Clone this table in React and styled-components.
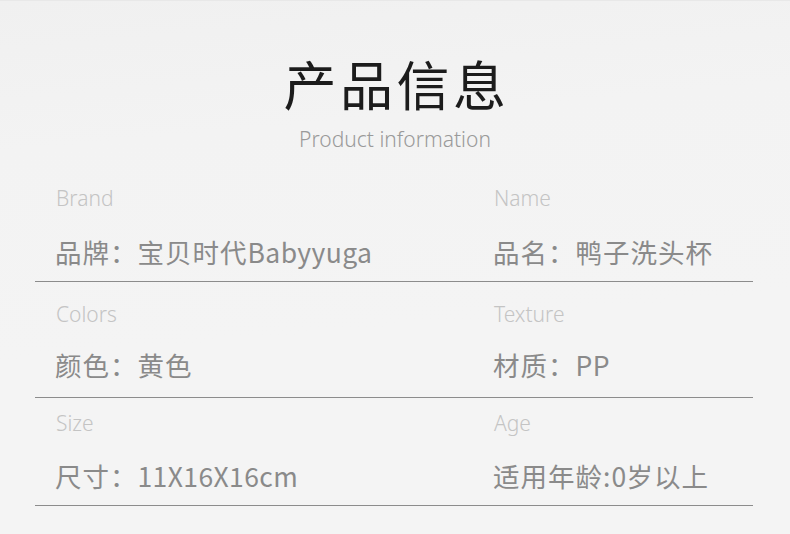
import React from 'react'
import styled, { createGlobalStyle } from 'styled-components'

const Global = createGlobalStyle`
  html, body { margin: 0; padding: 0; background: #f4f4f4; }
  body { font-family: "Noto Sans CJK SC", "Noto Sans", sans-serif; }
`

const Page = styled.div`
  width: 790px;
  height: 534px;
  overflow: hidden;
  background: linear-gradient(175deg, #f0f0f0 0%, #f3f3f3 25%, #f4f4f4 60%);
  border-top: 1px solid #e8e8e8;
  box-sizing: border-box;
  padding-top: 50px;
`

const Header = styled.div`
  display: flex;
  flex-direction: column;
  align-items: center;
`

const Title = styled.h1`
  margin: 0;
  font-size: 53px;
  line-height: 64px;
  font-weight: 400;
  letter-spacing: 3.5px;
  padding-left: 3px;
  color: #1c1c1c;
`

const Subtitle = styled.div`
  margin-top: 12px;
  font-family: "Noto Sans", sans-serif;
  font-size: 21px;
  line-height: 24px;
  font-weight: 300;
  color: #9a9a9a;
`

const Table = styled.div`
  margin: 24px 37px 0 35px;
`

const Row = styled.div`
  display: grid;
  grid-template-columns: 438px 1fr;
  padding: ${({ $top }) => $top}px 0 0 20px;
  height: ${({ $h }) => $h}px;
  box-sizing: border-box;
  border-bottom: 1px solid #8c8c8c;
`

const Cell = styled.div`
  display: flex;
  flex-direction: column;
`

const Label = styled.div`
  font-family: "Noto Sans", sans-serif;
  font-size: 21px;
  line-height: 24px;
  font-weight: 300;
  color: #c4c4c4;
  padding-left: 1px;
`

const Value = styled.div`
  margin-top: ${({ $gap }) => $gap}px;
  font-size: 26.5px;
  line-height: 32px;
  letter-spacing: 1px;
  color: #8a8a8a;
`

const Latin = styled.span`
  letter-spacing: 0.4px;
`

const rows = [
  { top: 11, h: 107, gap: 26, items: [['Brand', '品牌：宝贝时代Babyyuga'], ['Name', '品名：鸭子洗头杯']] },
  { top: 20, h: 116, gap: 23, items: [['Colors', '颜色：黄色'], ['Texture', '材质：PP']] },
  { top: 13, h: 108, gap: 25, items: [['Size', '尺寸：11X16X16cm'], ['Age', '适用年龄:0岁以上']] },
]

function renderValue(text) {
  return text.split(/([A-Za-z0-9]+)/).map((part, i) =>
    /^[A-Za-z0-9]+$/.test(part) ? <Latin key={i}>{part}</Latin> : part
  )
}

export default function App() {
  return (
    <Page>
      <Global />
      <Header>
        <Title>产品信息</Title>
        <Subtitle>Product information</Subtitle>
      </Header>
      <Table>
        {rows.map((r, i) => (
          <Row key={i} $top={r.top} $h={r.h}>
            {r.items.map(([label, value]) => (
              <Cell key={label}>
                <Label>{label}</Label>
                <Value $gap={r.gap}>{renderValue(value)}</Value>
              </Cell>
            ))}
          </Row>
        ))}
      </Table>
    </Page>
  )
}
